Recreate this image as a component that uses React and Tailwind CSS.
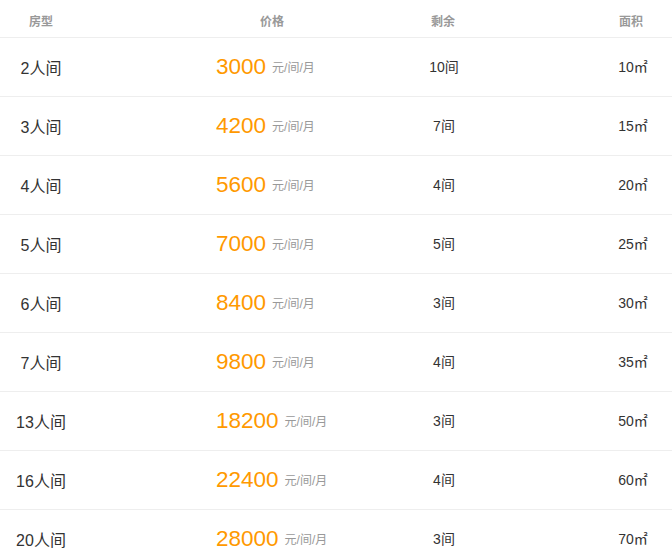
import React from "react";

const rows = [
  ["2人间", "3000", "10间", "10"],
  ["3人间", "4200", "7间", "15"],
  ["4人间", "5600", "4间", "20"],
  ["5人间", "7000", "5间", "25"],
  ["6人间", "8400", "3间", "30"],
  ["7人间", "9800", "4间", "35"],
  ["13人间", "18200", "3间", "50"],
  ["16人间", "22400", "4间", "60"],
  ["20人间", "28000", "3间", "70"],
];

export default function App() {
  return (
    <div className="w-[672px] h-[560px] overflow-hidden bg-white font-['Liberation_Sans','Noto_Sans_CJK_SC',sans-serif]">
      <div className="grid grid-cols-[82px_134px_112px_80px_70px_112px_82px] border-b border-[#eeeeee] pt-[14px] pb-[6px] text-[12px] leading-[17px] font-bold text-[#999999]">
        <div className="text-center">房型</div>
        <div />
        <div className="text-center">价格</div>
        <div />
        <div className="text-center">剩余</div>
        <div />
        <div className="text-center">面积</div>
      </div>
      {rows.map(([type, price, left, area]) => (
        <div
          key={type}
          className="grid h-[59px] grid-cols-[82px_134px_112px_80px_70px_112px_82px] items-center border-b border-[#eeeeee]"
        >
          <div className="mt-[3px] text-center text-[16px] text-[#333333]">{type}</div>
          <div />
          <div className="col-span-2 flex items-center whitespace-nowrap">
            <span className="text-[22.5px] leading-none text-[#ff9900]">{price}</span>
            <span className="ml-[6px] mt-[1px] text-[12px] leading-none text-[#999999]">元/间/月</span>
          </div>
          <div className="mt-[1px] text-center text-[14px] text-[#333333] whitespace-nowrap pl-[2px]">{left}</div>
          <div />
          <div className="mt-[1px] text-center text-[14px] text-[#333333] whitespace-nowrap pl-[4px]">
            {area}㎡
          </div>
        </div>
      ))}
    </div>
  );
}
